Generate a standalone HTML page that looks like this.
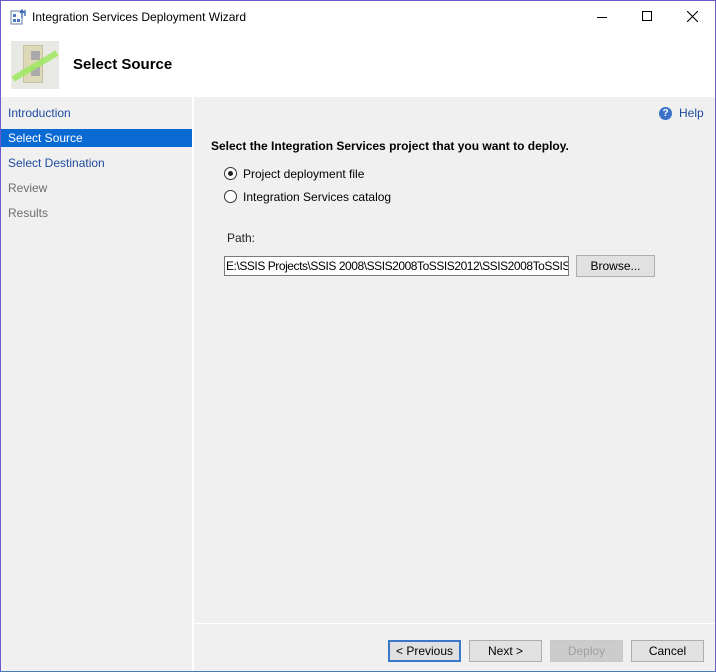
<!DOCTYPE html>
<html><head><style>
*{margin:0;padding:0;box-sizing:border-box}
body{width:716px;height:672px;overflow:hidden;font-family:"Liberation Sans",sans-serif;font-size:12px;background:#fff}
.win{position:absolute;left:0;top:0;width:716px;height:672px;border:1px solid #6a5acd;border-bottom-color:#4a7ab8;background:#fff}
.abs{position:absolute}
.nav{left:0;top:96px;width:191px;height:574px;background:#f0f0f0}
.content{left:193px;top:96px;width:521px;height:574px;background:#f0f0f0}
.nav div{position:absolute;left:0;width:191px;height:18px;line-height:18px;padding-left:7px;font-size:12px}
.btn{position:absolute;top:639px;height:22px;border:1px solid #adadad;background:#e1e1e1;text-align:center;line-height:20px;font-size:12px;color:#000}
.radio{position:absolute;width:13px;height:13px;border:1px solid #333;border-radius:50%;background:#fff}
</style></head><body>
<div class="win">
<svg class="abs" style="left:9px;top:7px" width="18" height="18" viewBox="0 0 18 18"><rect x="1" y="3" width="11" height="13" fill="#fff" stroke="#6b7fa8"/><rect x="3" y="6" width="3" height="3" fill="#4a78c0"/><rect x="7" y="11" width="3" height="3" fill="#4a78c0"/><rect x="3" y="11" width="3" height="3" fill="#4a78c0"/><path d="M12 10V3M10 5l2-3 2 3M15 8V2" stroke="#2a5db0" stroke-width="1.3" fill="none"/></svg>
<div class="abs" style="left:31px;top:9px;font-size:12px;color:#000">Integration Services Deployment Wizard</div>
<div class="abs" style="left:596px;top:16px;width:10px;height:1px;background:#000"></div>
<div class="abs" style="left:641px;top:10px;width:10px;height:10px;border:1px solid #000"></div>
<svg class="abs" style="left:686px;top:10px" width="11" height="11"><path d="M0 0L11 11M11 0L0 11" stroke="#000" stroke-width="1.1"/></svg>
<div class="abs" style="left:10px;top:40px;width:48px;height:48px;background:#e8e8e4"></div>
<div class="abs" style="left:22px;top:44px;width:20px;height:38px;background:#ddd8b8;border:1px solid #c8c2a0"></div>
<div class="abs" style="left:30px;top:50px;width:9px;height:9px;background:#aaa"></div>
<div class="abs" style="left:30px;top:66px;width:9px;height:9px;background:#aaa"></div>
<svg class="abs" style="left:10px;top:40px" width="48" height="48"><path d="M2 38L46 12" stroke="#9fe860" stroke-width="6" opacity=".85"/></svg>
<div class="abs" style="left:72px;top:55px;font-size:15px;font-weight:bold;color:#000">Select Source</div>
<div class="abs nav">
<div style="top:7px;color:#1f4aa0">Introduction</div>
<div style="top:32px;background:#0a6ad4;color:#fff">Select Source</div>
<div style="top:57px;color:#1f4aa0">Select Destination</div>
<div style="top:82px;color:#6d6d6d">Review</div>
<div style="top:107px;color:#6d6d6d">Results</div>
</div>
<div class="abs content"></div>
<div class="abs" style="left:193px;top:622px;width:521px;height:1px;background:#fff"></div>
<div class="abs" style="left:658px;top:106px;width:13px;height:13px;border-radius:50%;background:#3a72c8;color:#fff;font-size:10px;font-weight:bold;text-align:center;line-height:13px">?</div>
<div class="abs" style="left:678px;top:105px;color:#1f4aa0">Help</div>
<div class="abs" style="left:210px;top:138px;font-weight:bold;font-size:12px">Select the Integration Services project that you want to deploy.</div>
<div class="radio" style="left:223px;top:166px"><div style="position:absolute;left:3px;top:3px;width:5px;height:5px;border-radius:50%;background:#222"></div></div>
<div class="abs" style="left:242px;top:166px">Project deployment file</div>
<div class="radio" style="left:223px;top:189px"></div>
<div class="abs" style="left:242px;top:189px">Integration Services catalog</div>
<div class="abs" style="left:226px;top:230px;color:#222">Path:</div>
<div class="abs" style="left:223px;top:255px;width:345px;height:20px;background:#fff;border:1px solid #7a7a7a;padding-left:1px;line-height:18px;white-space:nowrap;overflow:hidden;letter-spacing:-0.45px">E:\SSIS Projects\SSIS 2008\SSIS2008ToSSIS2012\SSIS2008ToSSIS</div>
<div class="btn" style="left:575px;top:254px;width:79px">Browse...</div>
<div class="btn" style="left:387px;width:73px;border:2px solid #3a78c8;line-height:18px">&lt; Previous</div>
<div class="btn" style="left:468px;width:73px">Next &gt;</div>
<div class="btn" style="left:549px;width:73px;color:#a0a0a0;border-color:#c8c8c8;background:#ccc">Deploy</div>
<div class="btn" style="left:630px;width:73px">Cancel</div>
</div>
</body></html>
